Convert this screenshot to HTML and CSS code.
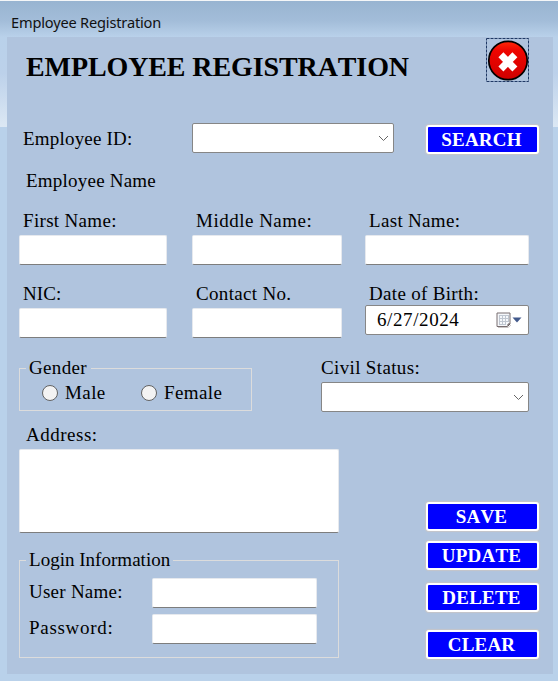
FILE: index.html
```html
<!DOCTYPE html>
<html lang="en">
<head>
<meta charset="utf-8">
<title>Employee Registration</title>
<link rel="stylesheet" href="styles.css">
</head>
<body>
<div class="window">
  <header class="titlebar">Employee Registration</header>
  <main class="panel">
    <div class="heading">
      <h1>EMPLOYEE REGISTRATION</h1>
      <button class="close" aria-label="Close">
        <svg width="43" height="44" viewBox="0 0 43 44">
          <defs>
            <linearGradient id="red" x1="0" y1="0" x2="0" y2="1">
              <stop offset="0" stop-color="#ff2a08"/>
              <stop offset=".25" stop-color="#ee0500"/>
              <stop offset="1" stop-color="#cf0000"/>
            </linearGradient>
          </defs>
          <rect x=".5" y=".5" width="42" height="43" fill="none" stroke="#1f3864" stroke-dasharray="3 1"/>
          <circle cx="22" cy="22.5" r="19.2" fill="url(#red)" stroke="#000" stroke-width="1.7"/>
          <path d="M14.9 16.8L28.9 31M28.9 16.8L14.9 31" stroke="#fff" stroke-width="7"/>
        </svg>
      </button>
    </div>

    <div class="id-row">
      <label>Employee ID:</label>
      <div class="combo">
        <svg class="chevron" width="11" height="7" viewBox="0 0 11 7"><path d="M1 1L5.5 5.5L10 1"/></svg>
      </div>
      <button class="btn">SEARCH</button>
    </div>

    <div class="section-label">Employee Name</div>

    <div class="fields">
      <div class="field first"><label>First Name:</label><input type="text"></div>
      <div class="field middle"><label class="wide">Middle Name:</label><input type="text"></div>
      <div class="field"><label>Last Name:</label><input type="text"></div>
    </div>
    <div class="fields">
      <div class="field first"><label class="tight">NIC:</label><input type="text"></div>
      <div class="field middle"><label>Contact No.</label><input type="text"></div>
      <div class="field date-field">
        <label>Date of Birth:</label>
        <div class="combo date">
          <span>6/27/2024</span>
          <svg width="26" height="17" viewBox="0 0 26 17">
            <path d="M2 15.5H12L15 13" fill="none" stroke="#c9c5c5"/>
            <path d="M1 1H14V12L11.5 14.5H1Z" fill="#f5f7fa" stroke="#786e70"/>
            <path d="M3 3.5H12.5M3 6.5H12.5M3 9.5H12.5M3 12.5H10M3.5 3V13M6.5 3V13M9.5 3V13M12.5 3V10" stroke="#bfc6d0" fill="none"/>
            <path d="M12 14V12H14" fill="none" stroke="#5f5557"/>
            <path d="M16.5 5.5H25.5L21 10.5Z" fill="#42598c"/>
          </svg>
        </div>
      </div>
    </div>

    <div class="status-row">
      <div class="group gender">
        <div class="legend">Gender</div>
        <div class="radios">
          <label><i class="radio"></i>Male</label>
          <label><i class="radio"></i>Female</label>
        </div>
      </div>
      <div class="civil">
        <label>Civil Status:</label>
        <div class="combo">
          <svg class="chevron" width="11" height="7" viewBox="0 0 11 7"><path d="M1 1L5.5 5.5L10 1"/></svg>
        </div>
      </div>
    </div>

    <div class="lower">
      <div class="details">
        <label class="address-label">Address:</label>
        <textarea></textarea>
        <div class="group login">
          <div class="legend tight">Login Information</div>
          <div class="login-row"><label>User Name:</label><input type="text"></div>
          <div class="login-row"><label class="wider">Password:</label><input type="password"></div>
        </div>
      </div>
      <div class="actions">
        <button class="btn">SAVE</button>
        <button class="btn">UPDATE</button>
        <button class="btn">DELETE</button>
        <button class="btn">CLEAR</button>
      </div>
    </div>
  </main>
</div>
</body>
</html>
```
FILE: styles.css
```css
* { box-sizing: border-box; }
body { margin: 0; overflow: hidden; }

.window {
  width: 558px;
  height: 681px;
  padding: 0 5px 7px 7px;
  border-top: 1px solid #f4f6f8;
  background:
    linear-gradient(#98b4d1 0, #a3bdd9 20px, #b9d1ea 36px) 0 0 / 100% 36px no-repeat,
    linear-gradient(#b9d1ea 0, #bcd1ea 40%, #dce8f4 100%) 0 36px / 100% 90px no-repeat,
    #b9d1ea;
  font: 19px/22px "Liberation Serif", "Times New Roman", serif;
  letter-spacing: .25px;
  color: #000;
}
.titlebar {
  height: 36px;
  padding: 9px 0 0 4px;
  font: 14.6px/24px "Noto Sans", "Open Sans", sans-serif;
  letter-spacing: -.18px;
  color: #111;
}
.panel {
  height: 637px;
  padding: 0 12px;
  background: #b0c4de;
}
label { display: block; }
input, textarea {
  display: block;
  width: 100%;
  margin: 0;
  border: 1px solid #e6e9ee;
  border-bottom-color: #7d7d7d;
  border-radius: 2px;
  background: #fff;
  outline: none;
  resize: none;
}
input { height: 30px; }

.heading { display: flex; height: 86px; }
h1 {
  margin: 14px 0 0 7px;
  width: 460px;
  font-size: 28px;
  line-height: 32px;
  letter-spacing: -.1px;
  font-kerning: none;
}
.close {
  width: 43px;
  height: 44px;
  margin: 1px 0 0;
  padding: 0;
  border: 0;
  background: none;
}
.close svg { display: block; }

.id-row { display: flex; width: 520px; height: 47px; }
.id-row label { width: 173px; padding: 5px 0 0 4px; letter-spacing: .2px; }
.id-row .combo { width: 202px; margin-right: 32px; }
.id-row .btn { margin-top: 2px; }

.combo {
  display: flex;
  align-items: center;
  justify-content: flex-end;
  height: 30px;
  padding-right: 4px;
  border: 1px solid #868686;
  border-radius: 2px;
  background: #fff;
}
.chevron path { fill: none; stroke: #666; stroke-width: 1; }

.btn {
  width: 113px;
  height: 29px;
  padding: 0 2px 0 0;
  border: 2px solid #fff;
  border-radius: 3px;
  box-shadow: 0 0 1px 1px #c6c6c9;
  background: #00f;
  color: #fff;
  font: bold 19px/25px "Liberation Serif", "Times New Roman", serif;
  letter-spacing: .2px;
  font-kerning: none;
}

.section-label { height: 40px; padding-left: 7px; letter-spacing: .22px; }

.fields {
  display: grid;
  grid-template-columns: 173px 173px 164px;
  height: 73px;
}
.first { width: 148px; }
.middle { width: 150px; }
.field label { height: 25px; padding-left: 4px; letter-spacing: .32px; }
.field .wide { letter-spacing: .5px; }
.field .tight { letter-spacing: .1px; }
.date-field label { height: 22px; }
.date { padding-right: 6px; }
.date span { flex: 1; padding-left: 11px; letter-spacing: .6px; }

.status-row { display: flex; gap: 69px; margin-top: 1px; height: 67px; }
.group { position: relative; border: 1px solid #dcdcdc; }
.legend {
  position: absolute;
  top: -12px;
  left: 6px;
  padding: 0 4px 0 3px;
  background: #b0c4de;
  letter-spacing: .35px;
}
.legend.tight { padding-right: 3px; letter-spacing: .02px; }
.gender { width: 233px; height: 43px; margin-top: 11px; }
.radios { display: flex; padding: 13px 0 0 22px; }
.radios label { display: flex; align-items: center; width: 99px; letter-spacing: .4px; }
.radio {
  width: 16px;
  height: 16px;
  margin-right: 7px;
  border: 1px solid #626262;
  border-radius: 50%;
  background: #f3f3f3;
}
.civil { width: 208px; }
.civil label { height: 25px; letter-spacing: .35px; }

.lower { display: flex; justify-content: space-between; width: 520px; }
.details { width: 320px; }
.address-label { height: 25px; padding-left: 7px; letter-spacing: .5px; }
textarea { height: 84px; }
.login { height: 98px; margin-top: 27px; padding: 17px 21px 0 9px; }
.login-row { display: flex; height: 36px; }
.login-row label { width: 123px; flex: none; padding-top: 3px; }
.login-row .wider { letter-spacing: .7px; }

.actions { display: flex; flex-direction: column; padding-top: 78px; }
.actions .btn { margin-bottom: 10px; }
.actions .btn:nth-child(2) { margin-bottom: 13px; }
.actions .btn:nth-child(3) { margin-bottom: 18px; }
```
